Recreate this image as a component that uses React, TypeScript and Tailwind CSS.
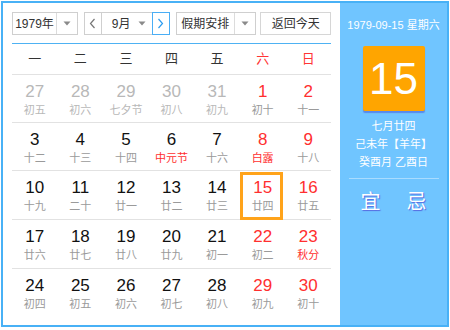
import React from "react";

type Cell = { d: number; l: string; other?: boolean; hol?: boolean; sel?: boolean };

const rows: Cell[][] = [
  [
    { d: 27, l: "初五", other: true },
    { d: 28, l: "初六", other: true },
    { d: 29, l: "七夕节", other: true },
    { d: 30, l: "初八", other: true },
    { d: 31, l: "初九", other: true },
    { d: 1, l: "初十" },
    { d: 2, l: "十一" },
  ],
  [
    { d: 3, l: "十二" },
    { d: 4, l: "十三" },
    { d: 5, l: "十四" },
    { d: 6, l: "中元节", hol: true },
    { d: 7, l: "十六" },
    { d: 8, l: "白露", hol: true },
    { d: 9, l: "十八" },
  ],
  [
    { d: 10, l: "十九" },
    { d: 11, l: "二十" },
    { d: 12, l: "廿一" },
    { d: 13, l: "廿二" },
    { d: 14, l: "廿三" },
    { d: 15, l: "廿四", sel: true },
    { d: 16, l: "廿五" },
  ],
  [
    { d: 17, l: "廿六" },
    { d: 18, l: "廿七" },
    { d: 19, l: "廿八" },
    { d: 20, l: "廿九" },
    { d: 21, l: "初一" },
    { d: 22, l: "初二" },
    { d: 23, l: "秋分", hol: true },
  ],
  [
    { d: 24, l: "初四" },
    { d: 25, l: "初五" },
    { d: 26, l: "初六" },
    { d: 27, l: "初七" },
    { d: 28, l: "初八" },
    { d: 29, l: "初九" },
    { d: 30, l: "初十" },
  ],
];

const rowClasses = [
  "grid grid-cols-7 h-[48px] border-b border-[#e2e2e2]",
  "grid grid-cols-7 h-[48px] border-b border-[#e2e2e2]",
  "grid grid-cols-7 h-[49px] border-b border-[#e2e2e2]",
  "grid grid-cols-7 h-[49px] border-b border-[#e2e2e2]",
  "grid grid-cols-7 h-[48px]",
];

const weekdays = ["一", "二", "三", "四", "五", "六", "日"];

const FONT = "font-['Liberation_Sans','Noto_Sans_CJK_SC',sans-serif]";

function Caret() {
  return (
    <svg width="8" height="5" viewBox="0 0 8 5">
      <path d="M0.5 0.5 L7.5 0.5 L4 4.5 Z" fill="#8a8a8a" />
    </svg>
  );
}

function Chevron({ dir, color }: { dir: "l" | "r"; color: string }) {
  return (
    <svg width="7" height="11" viewBox="0 0 7 11">
      <polyline
        points={dir === "l" ? "5.5,1 1.5,5.5 5.5,10" : "1.5,1 5.5,5.5 1.5,10"}
        fill="none"
        stroke={color}
        strokeWidth="1.2"
      />
    </svg>
  );
}

export default function App() {
  return (
    <div className={`w-[450px] h-[330px] bg-white pt-[1px] pl-[1px] ${FONT}`}>
      <div className="w-[448px] h-[326px] border-2 border-[#48b1f6] flex">
        {/* left */}
        <div className="w-[337px] px-[9px] pt-[9px] flex flex-col">
          {/* controls */}
          <div className="flex h-[23px] text-[12px] text-[#333]">
            <div className="w-[66px] flex border border-[#cfcfcf]">
              <div className="w-[44px] flex items-center justify-center border-r border-[#dcdcdc]">1979年</div>
              <div className="flex-1 flex items-center justify-center">
                <Caret />
              </div>
            </div>
            <div className="ml-[6px] flex">
              <div className="w-[18px] flex items-center justify-center border border-[#cfcfcf]">
                <Chevron dir="l" color="#777" />
              </div>
              <div className="w-[50px] flex items-center border-y border-[#cfcfcf]">
                <span className="ml-[10px]">9月</span>
                <span className="ml-auto mr-[6px] flex">
                  <Caret />
                </span>
              </div>
              <div className="w-[18px] flex items-center justify-center border border-[#4aaef5]">
                <Chevron dir="r" color="#2c9cf0" />
              </div>
            </div>
            <div className="ml-[6px] w-[81px] flex border border-[#cfcfcf]">
              <div className="w-[58px] flex items-center justify-center border-r border-[#dcdcdc]">假期安排</div>
              <div className="flex-1 flex items-center justify-center">
                <Caret />
              </div>
            </div>
            <div className="ml-[4px] w-[71px] flex items-center justify-center border border-[#d6d6d6]">返回今天</div>
          </div>
          <div className="mt-[8px] h-px bg-[#4eb2f3]" />
          {/* weekday header */}
          <div className="grid grid-cols-7 h-[31px] border-b border-[#e2e2e2] text-[13px]">
            {weekdays.map((w, i) => (
              <div
                key={w}
                className={`flex items-center justify-center ${i >= 5 ? "text-[#ff3535]" : "text-[#333]"}`}
              >
                {w}
              </div>
            ))}
          </div>
          {rows.map((r, ri) => (
            <div key={ri} className={rowClasses[ri]}>
              {r.map((c, ci) => {
                const weekend = ci >= 5;
                const numColor = c.other ? "text-[#b8b8b8]" : weekend ? "text-[#ff2f2f]" : "text-[#111]";
                const lunColor = c.other
                  ? "text-[#b8b8b8]"
                  : c.hol
                  ? "text-[#ff2f2f]"
                  : "text-[#9a9a9a]";
                return (
                  <div key={ci} className="relative flex flex-col items-center pt-[7px]">
                    <div className={`text-[17px] leading-[20px] ${numColor}`}>{c.d}</div>
                    <div className={`text-[11px] leading-[16px] ${lunColor}`}>{c.l}</div>
                    {c.sel && (
                      <div className="absolute top-[1px] left-0 w-[43px] h-[48px] border-[3px] border-[#ffa31a]" />
                    )}
                  </div>
                );
              })}
            </div>
          ))}
        </div>
        {/* right panel */}
        <div className="w-[107px] bg-[#70c5ff] flex flex-col items-center pt-[14px] text-white">
          <div className="text-[11px] leading-[16px]">1979-09-15 星期六</div>
          <div className="mt-[13px] w-[62px] h-[65px] rounded-[2px] bg-[#ffa500] flex items-center justify-center shadow-[0_2px_1px_rgba(70,90,220,0.55)]">
            <span className="text-[44px] leading-none font-['Liberation_Sans',sans-serif]">15</span>
          </div>
          <div className="mt-[6px] text-[11px] leading-[18px] flex flex-col items-center">
            <div>七月廿四</div>
            <div>己未年【羊年】</div>
            <div>癸酉月 乙酉日</div>
          </div>
          <div className="mt-[7px] w-[90px] h-px bg-[#a9dcff]" />
          <div className="mt-[11px] flex gap-[26px] text-[20px] leading-[24px] [text-shadow:1px_1px_1px_#5567e0]">
            <span>宜</span>
            <span>忌</span>
          </div>
        </div>
      </div>
    </div>
  );
}
